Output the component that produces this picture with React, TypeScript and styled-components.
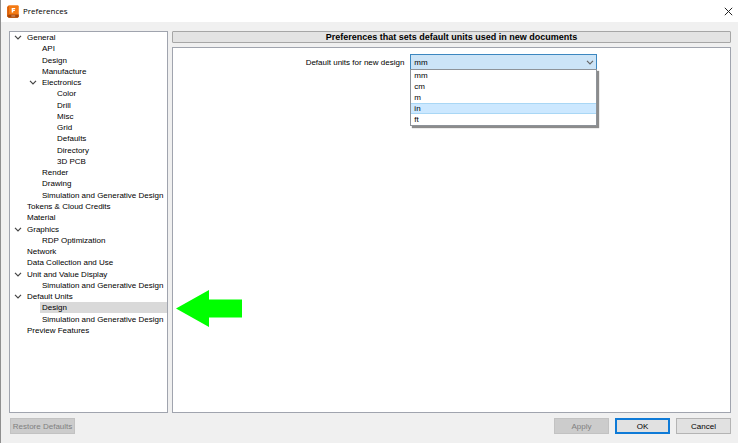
import React, { useState } from "react";
import styled, { createGlobalStyle } from "styled-components";

const GlobalStyle = createGlobalStyle`
  *, *::before, *::after { box-sizing: border-box; }
  body { margin: 0; background: #f0f0f0; }
  button, select { font: inherit; color: inherit; margin: 0; }
`;

const Window = styled.div`
  display: flex;
  flex-direction: column;
  min-height: 100vh;
  border-left: 1px solid #8f8f8f;
  background: #f0f0f0;
  color: #000;
  font: 8px/11px "Liberation Sans", Arial, sans-serif;
`;

const TitleBar = styled.header`
  display: flex;
  align-items: center;
  gap: 4px;
  height: 22px;
  padding: 0 5px 0 6px;
  background: #fff;
`;

const Title = styled.h1`
  flex: 1;
  margin: 0;
  color: #000;
  font: 8px/12px "Open Sans", "Noto Sans", sans-serif;
`;

const CloseButton = styled.button`
  display: flex;
  padding: 0;
  border: 0;
  background: none;
`;

const Body = styled.div`
  flex: 1;
  display: flex;
  gap: 4px;
  padding: 9px 7px 0 8px;
`;

const TreePanel = styled.nav`
  flex: none;
  width: 159px;
  border: 1px solid #a0a4ae;
  background: #fff;
`;

const Tree = styled.ul`
  display: grid;
  grid-auto-rows: 1fr;
  min-height: 304px;
  margin: 0;
  padding: 0;
  list-style: none;
`;

const TreeRow = styled.li<{ $depth: number }>`
  position: relative;
  display: flex;
  align-items: center;
  padding-left: ${(p) => p.$depth * 15}px;
  white-space: nowrap;
`;

const Toggle = styled.span`
  display: flex;
  justify-content: center;
  width: 15px;
`;

const TreeLabel = styled.span<{ $selected: boolean }>`
  flex: 1;
  padding-left: 2px;
  background: ${(p) => (p.$selected ? "#d9d9d9" : "transparent")};
`;

const Pointer = styled.svg`
  position: absolute;
  left: 100%;
  top: 50%;
  margin: -18px 0 0 9px;
`;

const Content = styled.main`
  flex: 1;
  display: flex;
  flex-direction: column;
  gap: 4px;
`;

const Heading = styled.h2`
  margin: 0;
  border: 1px solid #a6a6a6;
  border-radius: 1px;
  background: #e3e3e3;
  font-size: 9px;
  line-height: 10px;
  text-align: center;
`;

const Panel = styled.section`
  flex: 1;
  padding: 6px;
  border: 1px solid #a0a4ae;
  background: #fff;
`;

const Field = styled.div`
  display: flex;
  justify-content: center;
  align-items: center;
  gap: 6px;
`;

const Combo = styled.div`
  position: relative;
  width: 187px;
`;

const Select = styled.select`
  appearance: none;
  display: block;
  width: 100%;
  height: 16px;
  padding: 0 3px;
  border: 1px solid #3c87c0;
  border-radius: 0;
  background: #cce4f7;
  outline: none;
`;

const ComboChevron = styled.span`
  position: absolute;
  top: 6px;
  right: 3px;
  display: flex;
  pointer-events: none;
`;

const Options = styled.ul`
  position: absolute;
  top: 100%;
  left: 0;
  right: 0;
  margin: -1px 0 0;
  padding: 0;
  border: 1px solid #8e9399;
  background: #fff;
  box-shadow: 2px 2px 1px #8c8c8c;
  list-style: none;
`;

const Option = styled.li<{ $active: boolean }>`
  padding: 0 3px;
  background: ${(p) => (p.$active ? "#cce8ff" : "#fff")};
  box-shadow: ${(p) => (p.$active ? "inset 0 1px #a9d7f5, inset 0 -1px #a9d7f5" : "none")};
`;

const Footer = styled.footer`
  display: flex;
  gap: 6px;
  padding: 5px 7px 9px 9px;
`;

const Button = styled.button<{ $primary?: boolean }>`
  width: 55px;
  height: 16px;
  padding: 0;
  border: ${(p) => (p.$primary ? "2px solid #0f7bd7" : "1px solid #b4b4b4")};
  background: #e1e1e1;
  &:disabled {
    border-color: #c2c2c2;
    background: #cccccc;
    color: #808080;
  }
`;

const RestoreButton = styled(Button)`
  width: 65px;
  margin-right: auto;
`;

type Node = { label: string; depth: number; open?: boolean };

const nodes: Node[] = [
  { label: "General", depth: 0, open: true },
  { label: "API", depth: 1 },
  { label: "Design", depth: 1 },
  { label: "Manufacture", depth: 1 },
  { label: "Electronics", depth: 1, open: true },
  { label: "Color", depth: 2 },
  { label: "Drill", depth: 2 },
  { label: "Misc", depth: 2 },
  { label: "Grid", depth: 2 },
  { label: "Defaults", depth: 2 },
  { label: "Directory", depth: 2 },
  { label: "3D PCB", depth: 2 },
  { label: "Render", depth: 1 },
  { label: "Drawing", depth: 1 },
  { label: "Simulation and Generative Design", depth: 1 },
  { label: "Tokens & Cloud Credits", depth: 0 },
  { label: "Material", depth: 0 },
  { label: "Graphics", depth: 0, open: true },
  { label: "RDP Optimization", depth: 1 },
  { label: "Network", depth: 0 },
  { label: "Data Collection and Use", depth: 0 },
  { label: "Unit and Value Display", depth: 0, open: true },
  { label: "Simulation and Generative Design", depth: 1 },
  { label: "Default Units", depth: 0, open: true },
  { label: "Design", depth: 1 },
  { label: "Simulation and Generative Design", depth: 1 },
  { label: "Preview Features", depth: 0 },
];

const selectedIndex = 24;
const units = ["mm", "cm", "m", "in", "ft"];

const Chevron = ({ color }: { color: string }) => (
  <svg width="8" height="5" viewBox="0 0 8 5" fill="none" stroke={color} strokeWidth="1.2" aria-hidden="true">
    <path d="M1 .8 4 3.8 7 .8" />
  </svg>
);

const AppIcon = () => (
  <svg width="12" height="13" viewBox="0 0 11 13" preserveAspectRatio="none" aria-hidden="true">
    <path d="M1 1.2 2 .3h8l.8.8v10.6l-1 1H1.6L.2 11.5V2z" fill="#f47a13" />
    <path d="M.2 9.4h10.6v2.3l-1 1H1.6L.2 11.5z" fill="#a94708" />
    <path d="M.2 2 1.8.3v9.1L.2 11z" fill="#d95f0b" />
    <path d="M4.3 7.6V3h3.2v1.2H5.7v.8h1.5v1.1H5.7v1.5z" fill="#fff" />
    <path d="M4 11h3.5" stroke="#e8b48e" strokeWidth=".8" />
  </svg>
);

export default function App() {
  const [unit, setUnit] = useState("mm");
  return (
    <Window>
      <GlobalStyle />
      <TitleBar>
        <AppIcon />
        <Title>Preferences</Title>
        <CloseButton aria-label="Close">
          <svg width="9" height="9" viewBox="0 0 9 9" stroke="#222" strokeWidth="1">
            <path d="M.8.8 8.2 8.2M8.2.8.8 8.2" />
          </svg>
        </CloseButton>
      </TitleBar>
      <Body>
        <TreePanel aria-label="Preference categories">
          <Tree role="tree">
            {nodes.map((node, i) => (
              <TreeRow
                key={i}
                $depth={node.depth}
                role="treeitem"
                aria-level={node.depth + 1}
                aria-expanded={node.open}
                aria-selected={i === selectedIndex}
              >
                <Toggle>{node.open && <Chevron color="#444" />}</Toggle>
                <TreeLabel $selected={i === selectedIndex}>{node.label}</TreeLabel>
                {i === selectedIndex && (
                  <Pointer width="66" height="37" viewBox="0 0 66 37" aria-hidden="true">
                    <path d="M0 18.5 33 0v9.5h33v18H33V37z" fill="#00ff00" />
                  </Pointer>
                )}
              </TreeRow>
            ))}
          </Tree>
        </TreePanel>
        <Content>
          <Heading>Preferences that sets default units used in new documents</Heading>
          <Panel>
            <Field>
              <label htmlFor="unit">Default units for new design</label>
              <Combo>
                <Select id="unit" value={unit} onChange={(e) => setUnit(e.target.value)}>
                  {units.map((u) => (
                    <option key={u}>{u}</option>
                  ))}
                </Select>
                <ComboChevron>
                  <Chevron color="#666" />
                </ComboChevron>
                <Options role="listbox" aria-label="Units">
                  {units.map((u) => (
                    <Option key={u} role="option" aria-selected={u === unit} $active={u === "in"} onClick={() => setUnit(u)}>
                      {u}
                    </Option>
                  ))}
                </Options>
              </Combo>
            </Field>
          </Panel>
        </Content>
      </Body>
      <Footer>
        <RestoreButton disabled>Restore Defaults</RestoreButton>
        <Button disabled>Apply</Button>
        <Button $primary>OK</Button>
        <Button>Cancel</Button>
      </Footer>
    </Window>
  );
}
